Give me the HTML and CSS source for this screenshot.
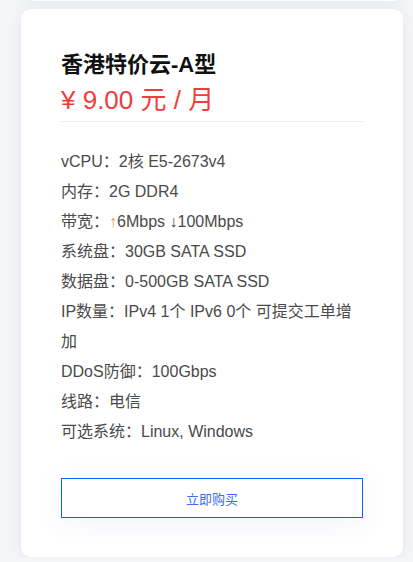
FILE: index.html
```html
<!DOCTYPE html>
<html lang="zh-CN">
<head>
<meta charset="utf-8">
<title>香港特价云-A型</title>
<link rel="stylesheet" href="styles.css">
</head>
<body>
<div class="list">
  <div class="card card-prev"></div>
  <div class="card">
    <div class="head">
      <h2 class="title">香港特价云-A型</h2>
      <div class="price">¥ 9.00 元 / 月</div>
    </div>
    <ul class="specs">
      <li>vCPU：2核 E5-2673v4</li>
      <li>内存：2G DDR4</li>
      <li>带宽：<span class="up">↑</span>6Mbps ↓100Mbps</li>
      <li>系统盘：30GB SATA SSD</li>
      <li>数据盘：0-500GB SATA SSD</li>
      <li>IP数量：IPv4 1个 IPv6 0个 可提交工单增加</li>
      <li>DDoS防御：100Gbps</li>
      <li>线路：电信</li>
      <li>可选系统：Linux, Windows</li>
    </ul>
    <a class="buy" href="#">立即购买</a>
  </div>
</div>
</body>
</html>
```

FILE: styles.css
```css
* { box-sizing: border-box; }
html, body { margin: 0; padding: 0; }
body {
  background: #f4f5f9;
  font-family: "Liberation Sans", "Noto Sans CJK SC", sans-serif;
  overflow: hidden;
}
.list {
  display: flex;
  flex-direction: column;
  gap: 8px;
  padding: 0 10px 0 21px;
  margin-top: -19px;
}
.card {
  background: #fff;
  border-radius: 10px;
  box-shadow: 0 2px 14px rgba(20, 30, 90, 0.06);
  padding: 41px 40px 39px;
}
.card-prev {
  height: 20px;
  padding: 0;
  margin-left: 4px;
}
.head {
  border-bottom: 1px solid #ececf0;
  padding-bottom: 3px;
}
.title {
  margin: 0;
  font-size: 22px;
  line-height: 30px;
  font-weight: 700;
  color: #111;
}
.price {
  margin-top: 2px;
  font-size: 26px;
  line-height: 36px;
  color: #f03c3e;
}
.specs {
  list-style: none;
  margin: 25px 0 0;
  padding: 0;
  font-size: 16px;
  line-height: 30px;
  color: #4a4a4a;
}
.up { color: #d8965c; }
.buy {
  display: flex;
  align-items: center;
  justify-content: center;
  height: 40px;
  margin-top: 31px;
  border: 1px solid #0a66f5;
  color: #3d6cf2;
  font-size: 13px;
  text-decoration: none;
  box-shadow: 0 4px 30px rgba(40, 70, 180, 0.07);
}
```
